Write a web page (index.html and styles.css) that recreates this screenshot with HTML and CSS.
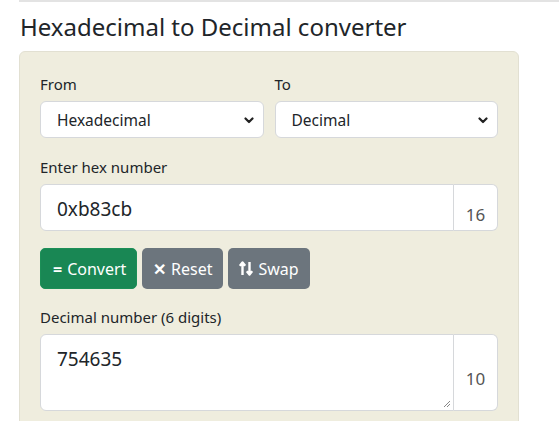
FILE: index.html
```html
<!DOCTYPE html>
<html lang="en">
<head>
<meta charset="utf-8">
<title>Hexadecimal to Decimal converter</title>
<link rel="stylesheet" href="styles.css">
</head>
<body>
<div class="page">
  <div class="rule"></div>
  <h1 class="title">Hexadecimal to Decimal converter</h1>
  <div class="panel">
    <div class="row2">
      <div class="field">
        <label class="lbl">From</label>
        <div class="select"><span>Hexadecimal</span><svg class="chev" width="10" height="7" viewBox="0 0 10 7"><path d="M1.5 1.5 L5 5 L8.5 1.5" fill="none" stroke="#222" stroke-width="2.2" stroke-linecap="round" stroke-linejoin="round"/></svg></div>
      </div>
      <div class="field">
        <label class="lbl">To</label>
        <div class="select"><span>Decimal</span><svg class="chev" width="10" height="7" viewBox="0 0 10 7"><path d="M1.5 1.5 L5 5 L8.5 1.5" fill="none" stroke="#222" stroke-width="2.2" stroke-linecap="round" stroke-linejoin="round"/></svg></div>
      </div>
    </div>
    <label class="lbl gap-top">Enter hex number</label>
    <div class="group">
      <div class="input">0xb83cb</div>
      <div class="addon">16</div>
    </div>
    <div class="buttons">
      <button class="btn btn-green"><span class="ico">=</span> Convert</button>
      <button class="btn btn-gray"><span class="ico">&#x2715;</span> Reset</button>
      <button class="btn btn-gray"><svg class="swap" width="14" height="15" viewBox="0 0 14 15"><path d="M3.5 14 V2 M0.8 4.8 L3.5 1.5 L6.2 4.8" fill="none" stroke="#fff" stroke-width="2.4" stroke-linejoin="round"/><path d="M10.5 1 V13 M7.8 10.2 L10.5 13.5 L13.2 10.2" fill="none" stroke="#fff" stroke-width="2.4" stroke-linejoin="round"/></svg> Swap</button>
    </div>
    <label class="lbl gap-top2">Decimal number (6 digits)</label>
    <div class="group tall">
      <div class="input area">754635<svg class="grip" width="8" height="8" viewBox="0 0 8 8"><path d="M7 1 L1 7 M7 4 L4 7" stroke="#888" stroke-width="1"/></svg></div>
      <div class="addon addon-tall">10</div>
    </div>
  </div>
</div>
</body>
</html>
```

FILE: styles.css
```css
* { box-sizing: border-box; }
html, body { margin: 0; padding: 0; background: #fff; }
body {
  font-family: "Noto Sans", "Open Sans", sans-serif;
  color: #212529;
  overflow: hidden;
}
.page { padding-left: 19px; }
.rule { height: 2px; background: #e3e3e3; }
.title {
  margin: 8px 0 0 1px;
  font-size: 24px;
  font-weight: 400;
  line-height: 34px;
  color: #212529;
}
.panel {
  margin-top: 7px;
  width: 500px;
  height: 420px;
  background: #efedde;
  border: 1px solid #e2e0d2;
  border-radius: 6px;
  padding: 20px;
}
.row2 {
  display: grid;
  grid-template-columns: 1fr 1fr;
  column-gap: 11px;
}
.lbl {
  display: block;
  font-size: 15px;
  line-height: 24px;
  margin-bottom: 5px;
}
.gap-top { margin-top: 17px; }
.gap-top2 { margin-top: 16px; }
.select {
  height: 37px;
  background: #fff;
  border: 1px solid #d6d8db;
  border-radius: 6px;
  display: flex;
  align-items: center;
  justify-content: space-between;
  padding: 1px 9px 0 16px;
  font-size: 15.5px;
}
.chev { display: block; }
.group { display: flex; height: 47px; }
.input {
  flex: 1;
  background: #fff;
  border: 1px solid #d6d8db;
  border-radius: 6px 0 0 6px;
  font-size: 19px;
  padding: 3px 16px 0;
  display: flex;
  align-items: center;
}
.addon {
  width: 44px;
  background: #fff;
  border: 1px solid #d6d8db;
  border-left: none;
  border-radius: 0 6px 6px 0;
  display: flex;
  align-items: center;
  justify-content: center;
  padding-top: 14px;
  font-size: 17px;
  color: #555;
}
.buttons { display: flex; gap: 5px; margin-top: 17px; }
.btn {
  height: 41px;
  border: 1px solid transparent;
  border-radius: 5px;
  color: #fff;
  font-family: inherit;
  font-size: 16px;
  padding: 0 10px;
  display: flex;
  align-items: center;
  gap: 5px;
}
.btn-green { background: #198754; border-color: #1c8f57; width: 97px; padding: 0 12px; }
.btn-gray { background: #6c757d; }
.ico { font-weight: 700; }
.group.tall { height: 77px; }
.area {
  position: relative;
  align-items: flex-start;
  padding-top: 11px;
}
.grip { position: absolute; right: 2px; bottom: 2px; }
.addon-tall { padding-top: 12px; }
```
